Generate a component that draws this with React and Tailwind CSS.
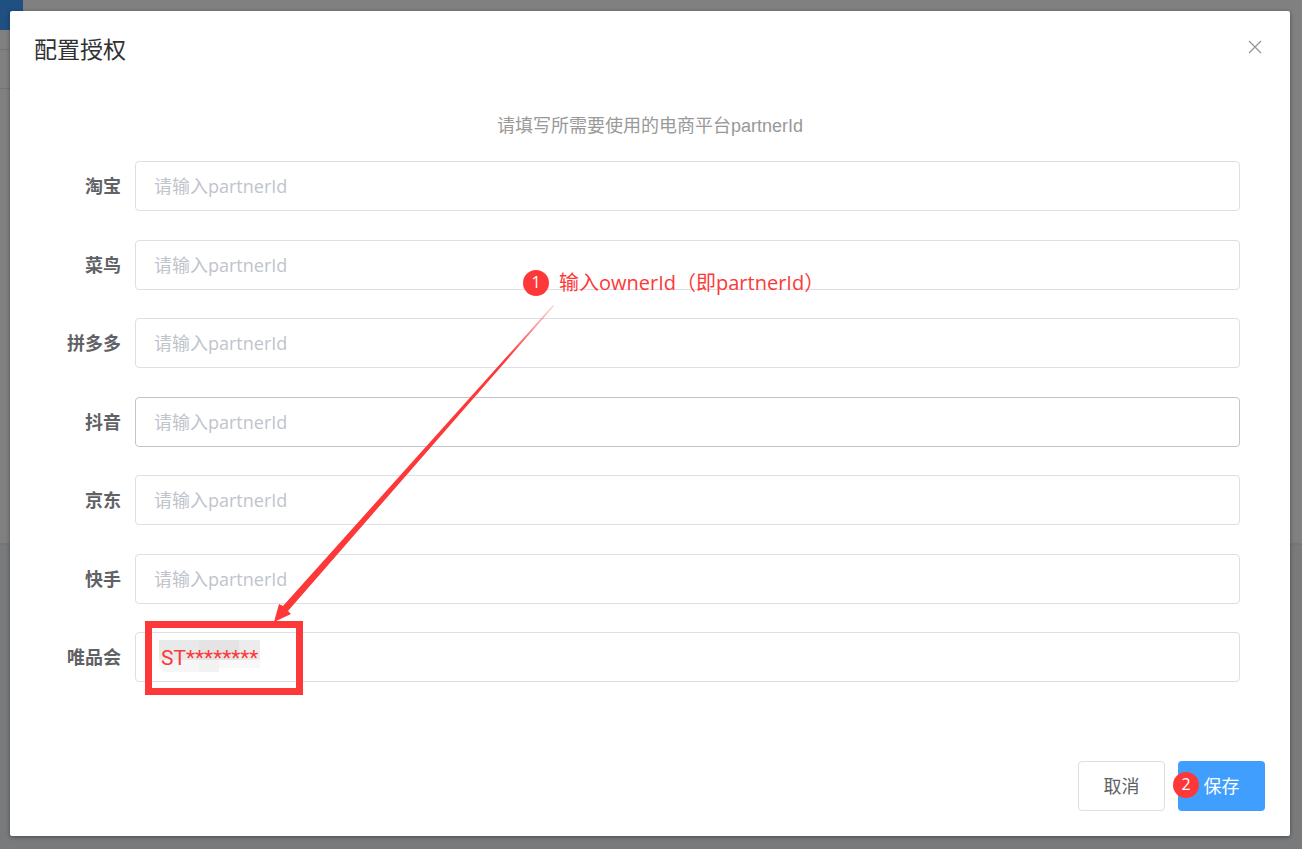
import React from "react";

const platforms = [
  { id: "taobao", label: "淘宝" },
  { id: "cainiao", label: "菜鸟" },
  { id: "pdd", label: "拼多多" },
  { id: "douyin", label: "抖音", hover: true },
  { id: "jd", label: "京东" },
  { id: "kuaishou", label: "快手" },
  { id: "vip", label: "唯品会", value: "ST********" },
];

const StepBadge = ({ number }) => (
  <span className="flex size-[26px] shrink-0 items-center justify-center rounded-full bg-[#fd3838] pb-0.5 text-base leading-5 text-white">
    {number}
  </span>
);

const PageBehind = () => (
  <div className="absolute inset-0 flex flex-col bg-[#808080]" aria-hidden="true">
    <div className="h-[30px] w-[23px] bg-[#205081]" />
    <div className="h-5 w-6 border-b border-[#737373]" />
    <div className="h-[39px] w-6 border-b border-[#737373]" />
    <div className="h-[454px]" />
    <div className="flex-1 border-t-2 border-[#757677] bg-[#797a7b]" />
  </div>
);

const Arrow = () => (
  <svg className="pointer-events-none absolute left-[224px] top-[144px]" width="280" height="317" viewBox="0 0 280 317" aria-hidden="true">
    <defs>
      <linearGradient id="fade" gradientUnits="userSpaceOnUse" x1="280" y1="0" x2="232" y2="53">
        <stop offset="0" stopColor="#fd3838" stopOpacity="0.2" />
        <stop offset="1" stopColor="#fd3838" />
      </linearGradient>
    </defs>
    <path d="M279 0 L9 301 L5 299 L0 317 L17 309 L14 306 L280 1 Z" fill="url(#fade)" />
  </svg>
);

const PlatformRow = ({ id, label, value, hover }) => (
  <div className="flex items-center">
    <label htmlFor={id} className="w-[85px] shrink-0 pr-3.5 text-right font-bold text-[#606266]">{label}</label>
    <div className="relative h-[50px] flex-1">
      {value && (
        <div className="absolute left-6 top-2 h-8 w-[101px]">
          <div className="flex h-5">
            <div className="w-10 bg-[#e8e9e9]" />
            <div className="w-10 bg-[#e4e4e4]" />
            <div className="flex-1 bg-[#ececec]" />
          </div>
          <div className="flex h-3">
            <div className="w-10 rounded-bl-lg bg-[#f6f6f6]" />
            <div className="w-5 bg-[#f2f2f2]" />
            <div className="h-2 flex-1 bg-[#f8f8f8]" />
          </div>
        </div>
      )}
      <input
        id={id}
        type="text"
        defaultValue={value}
        placeholder="请输入partnerId"
        className={`relative block h-full w-full rounded border outline-none placeholder:text-[#c0c4cc] placeholder:opacity-100 ${
          hover ? "border-[#c0c4cc]" : "border-[#dcdfe6]"
        } ${value ? "px-[25px] pt-0.5 font-[Roboto] text-[21px] text-[#fd3838]" : "px-[18px]"}`}
      />
      {value && <div className="pointer-events-none absolute left-2.5 -top-[11px] h-[74px] w-[158px] border-[7px] border-[#fd3838]" />}
    </div>
  </div>
);

const App = () => (
  <div className="relative flex min-h-screen flex-col pt-[11px] pr-3 pb-[13px] pl-2.5 font-['Open_Sans','Noto_Sans_CJK_SC',sans-serif] text-lg leading-6">
    <PageBehind />
    <div role="dialog" aria-labelledby="dialog-title" className="relative flex flex-1 flex-col rounded-xs bg-white pb-[25px] shadow-[0_1px_4px_rgba(0,0,0,0.4)]">
      <header className="flex items-start justify-between pt-[23px] pr-7 pl-6">
        <h2 id="dialog-title" className="text-[23px] leading-[30px] text-[#303133]">配置授权</h2>
        <button type="button" aria-label="关闭" className="mt-1.5 text-[#909399]">
          <svg width="14" height="14" viewBox="0 0 14 14" fill="none" stroke="currentColor" strokeWidth="1.2">
            <path d="M1 1 L13 13 M13 1 L1 13" />
          </svg>
        </button>
      </header>

      <p className="mt-[50px] mb-[22px] text-center font-['Liberation_Sans','Noto_Sans_CJK_SC',sans-serif] leading-[25px] text-[#999]">
        请填写所需要使用的电商平台partnerId
      </p>

      <form className="relative mr-[50px] ml-10 flex flex-1 flex-col justify-between">
        {platforms.map((platform) => (
          <PlatformRow key={platform.id} {...platform} />
        ))}
        <div className="absolute top-[108px] left-[473px] flex items-center gap-2.5 text-xl leading-7 text-[#fd3838]">
          <StepBadge number={1} />
          <span>输入ownerId（即partnerId）</span>
        </div>
        <Arrow />
      </form>

      <footer className="mt-[79px] flex justify-end gap-[13px] pr-[25px]">
        <button type="button" className="h-[50px] w-[87px] rounded border border-[#dcdfe6] bg-white text-[#606266]">取消</button>
        <button type="button" className="relative h-[50px] w-[87px] rounded bg-[#409eff] text-white">
          保存
          <span className="absolute top-[11px] -left-[5px]"><StepBadge number={2} /></span>
        </button>
      </footer>
    </div>
  </div>
);

export default App;
